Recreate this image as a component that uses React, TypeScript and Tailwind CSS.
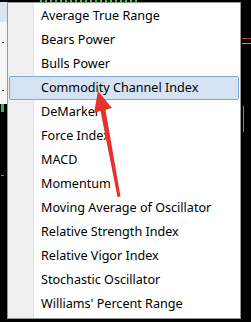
import React from "react";

const items = [
  "Average True Range",
  "Bears Power",
  "Bulls Power",
  "Commodity Channel Index",
  "DeMarker",
  "Force Index",
  "MACD",
  "Momentum",
  "Moving Average of Oscillator",
  "Relative Strength Index",
  "Relative Vigor Index",
  "Stochastic Oscillator",
  "Williams' Percent Range",
];

const ACTIVE = 3;

export default function App() {
  return (
    <div className="relative w-[251px] h-[322px] bg-black overflow-hidden flex flex-col">
      {/* chart peeking above the popup */}
      <div className="h-[2px] flex">
        <div className="w-[40px]" />
        <div className="w-[100px] bg-[repeating-linear-gradient(90deg,#3ec43e_0_2px,transparent_2px_5px)]" />
      </div>

      <div className="flex">
        {/* parent menu + chart on the left */}
        <div className="w-[7px] flex flex-col">
          <div className="h-[20px] bg-[#d8e5f3]" />
          <div className="h-[82px] bg-[#f6f6f6] flex flex-col pl-[2px]">
            <div className="h-[20px]" />
            <div className="w-[2px] h-[1px] bg-[#333]" />
            <div className="h-[47px]" />
            <div className="w-[2px] h-[1px] bg-[#333]" />
          </div>
          <div className="ml-[1px] w-[3px] h-[8px] bg-[#2fbf3a]" />
          <div className="h-[63px]" />
          <div className="ml-[1px] w-[3px] h-[1px] bg-[#2fbf3a]" />
        </div>

        {/* popup menu */}
        <div
          className="w-[234px] h-[317px] border border-[#979797] bg-white"
          style={{ fontFamily: '"Noto Sans", "Open Sans", sans-serif' }}
        >
          <ul className="h-full flex flex-col pt-[1px] px-[1px] bg-[linear-gradient(90deg,#f0f0f0_0_25px,#e3e3e3_25px_26px,#fff_26px)]">
            {items.map((label, i) => (
              <li
                key={label}
                className={
                  i === ACTIVE
                    ? "h-[24px] flex items-center whitespace-nowrap pl-[31px] text-[12.6px] text-black border border-[#7ea6d6] bg-[#d5e3f3] rounded-[2px]"
                    : "h-[24px] flex items-center whitespace-nowrap pl-[32px] text-[12.6px] text-black"
                }
              >
                {label}
              </li>
            ))}
          </ul>
        </div>

        {/* chart on the right */}
        <div className="flex-1 flex flex-col pl-[1px]">
          <div className="h-[36px]" />
          <div className="h-[1px] bg-[#c0392b]" />
          <div className="h-[4px]" />
          <div className="h-[1px] bg-[#9a9a9a]" />
          <div className="h-[62px]" />
          <div className="ml-[1px] w-[1px] h-[26px] bg-[#2fbf3a]" />
        </div>
      </div>

      {/* red annotation arrow */}
      <svg className="absolute left-0 top-0 pointer-events-none" width="251" height="322" viewBox="0 0 251 322">
        <polygon
          fill="#e5322c"
          points="98,91 94,113 100.5,111 117.5,197 120.5,196.5 105.5,109.8 112,108"
        />
      </svg>
    </div>
  );
}
